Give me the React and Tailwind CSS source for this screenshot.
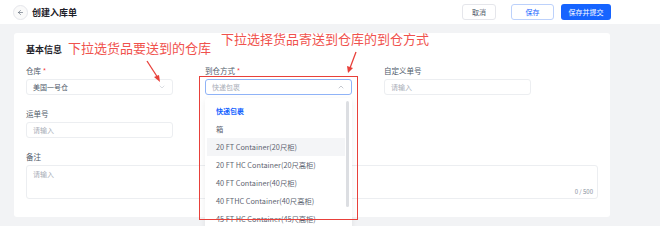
import { ChevronDown, ChevronUp, ArrowLeft } from 'lucide-react'

const options = [
    "箱",
    "20 FT Container(20尺柜)",
    "20 FT HC Container(20尺高柜)",
    "40 FT Container(40尺柜)",
    "40 FTHC Container(40尺高柜)",
    "45 FT HC Container(45尺高柜)",
]

const App = () => {
    return (
        <div className="relative w-[660px] h-[226px] overflow-hidden bg-[#f2f3f5] text-[#1d2129]" style={{ fontFamily: '"Noto Sans CJK SC", "Noto Sans", sans-serif' }}>

            {/* --- HEADER --- */}
            <div className="h-[24px] bg-white flex items-center pl-[13px] pr-[49px]">
                <div className="w-[15px] h-[15px] rounded-full border border-[#e5e6eb] bg-[#fafafa] flex items-center justify-center text-[#4e5969]">
                    <ArrowLeft size={7} strokeWidth={2} />
                </div>
                <h1 className="ml-[4px] text-[9px] font-bold leading-none">创建入库单</h1>
                <div className="ml-auto flex items-center">
                    <button className="w-[34px] h-[16px] rounded-[3px] border border-[#e5e6eb] text-[7px] text-[#4e5969] leading-none">取消</button>
                    <button className="ml-[15px] w-[43px] h-[16px] rounded-[3px] border border-[#bcd1fb] text-[7px] text-[#1664ff] leading-none">保存</button>
                    <button className="ml-[7px] w-[50px] h-[16px] rounded-[3px] bg-[#1664ff] text-[7px] text-white leading-none">保存并提交</button>
                </div>
            </div>

            {/* --- CARD --- */}
            <div className="ml-[14px] mt-[9px] w-[596px] h-[184px] bg-white rounded-[3px] pl-[12px] pr-[12px] pt-[11px]">
                <h2 className="text-[9px] font-bold leading-[12px]">基本信息</h2>

                <div className="mt-[10px] grid grid-cols-[147px_147px_147px] gap-x-[32px]">
                    <div>
                        <p className="text-[7.5px] leading-[10px] text-[#4e5969]">仓库 <span className="text-[#f53f3f]">*</span></p>
                        <div className="mt-[3px] h-[16px] rounded-[3px] border border-[#eceef1] flex items-center justify-between px-[6px]">
                            <span className="text-[7px] text-[#4e5969]">美国一号仓</span>
                            <ChevronDown size={8} className="text-[#c9cdd4]" />
                        </div>
                    </div>
                    <div>
                        <p className="text-[7.5px] leading-[10px] text-[#4e5969]">到仓方式 <span className="text-[#f53f3f]">*</span></p>
                        <div className="mt-[3px] h-[16px] rounded-[3px] border border-[#8fb3f7] flex items-center justify-between px-[6px]">
                            <span className="text-[7px] text-[#a9aeb8]">快递包裹</span>
                            <ChevronUp size={8} className="text-[#a9aeb8]" />
                        </div>
                    </div>
                    <div>
                        <p className="text-[7.5px] leading-[10px] text-[#4e5969]">自定义单号</p>
                        <div className="mt-[3px] h-[16px] rounded-[3px] border border-[#eceef1] flex items-center px-[6px]">
                            <span className="text-[7px] text-[#a9aeb8]">请输入</span>
                        </div>
                    </div>

                    <div className="mt-[14px]">
                        <p className="text-[7.5px] leading-[10px] text-[#4e5969]">运单号</p>
                        <div className="mt-[3px] h-[16px] rounded-[3px] border border-[#eceef1] flex items-center px-[6px]">
                            <span className="text-[7px] text-[#a9aeb8]">请输入</span>
                        </div>
                    </div>
                </div>

                <div className="mt-[14px]">
                    <p className="text-[7.5px] leading-[10px] text-[#4e5969]">备注</p>
                    <div className="mt-[3px] w-[572px] h-[34px] rounded-[3px] border border-[#eceef1] relative px-[6px] pt-[3px] text-[7px] leading-[10px]">
                        <span className="text-[#a9aeb8]">请输入</span>
                        <span className="absolute right-[4px] bottom-[3px] text-[6px] text-[#86909c] leading-none">0 / 500</span>
                    </div>
                </div>
            </div>

            {/* --- DROPDOWN --- */}
            <div className="absolute left-[205px] top-[98px] w-[147px] h-[140px] bg-white shadow-[0_2px_6px_rgba(0,0,0,0.08)] rounded-[3px] pt-[4px] px-[2px]">
                <p className="h-[18px] flex items-center pl-[9px] text-[7px] font-bold text-[#1664ff]">快递包裹</p>
                {options.map((o, i) => (
                    <div key={o} className={`h-[18px] flex items-center pl-[9px] w-[138px] text-[7.3px] text-[#5c6370] ${i === 1 ? 'bg-[#f4f5f7]' : ''}`}>
                        {o}
                    </div>
                ))}
                <div className="absolute right-[3px] top-[3px] w-[3px] h-[106px] rounded-full bg-[#dcdee2]"></div>
            </div>

            {/* --- ANNOTATIONS --- */}
            <div className="absolute left-[199px] top-[76px] w-[159px] h-[144px] border-[1.5px] border-[#e8403a] pointer-events-none"></div>
            <p className="absolute left-[68px] top-[40px] text-[13px] leading-[16px] text-[#f0524d]">下拉选货品要送到的仓库</p>
            <p className="absolute left-[221px] top-[31px] text-[13px] leading-[16px] text-[#f0524d]">下拉选择货品寄送到仓库的到仓方式</p>
            <svg className="absolute left-0 top-0" width="660" height="226">
                <line x1="147" y1="61" x2="158" y2="78" stroke="#e8403a" strokeWidth="1.3" />
                <polygon points="160,82 154,77 159,75" fill="#e8403a" />
                <line x1="356" y1="52" x2="350" y2="68" stroke="#e8403a" strokeWidth="1.3" />
                <polygon points="348,73 347,66 353,68" fill="#e8403a" />
            </svg>
        </div>
    )
}

export default App
